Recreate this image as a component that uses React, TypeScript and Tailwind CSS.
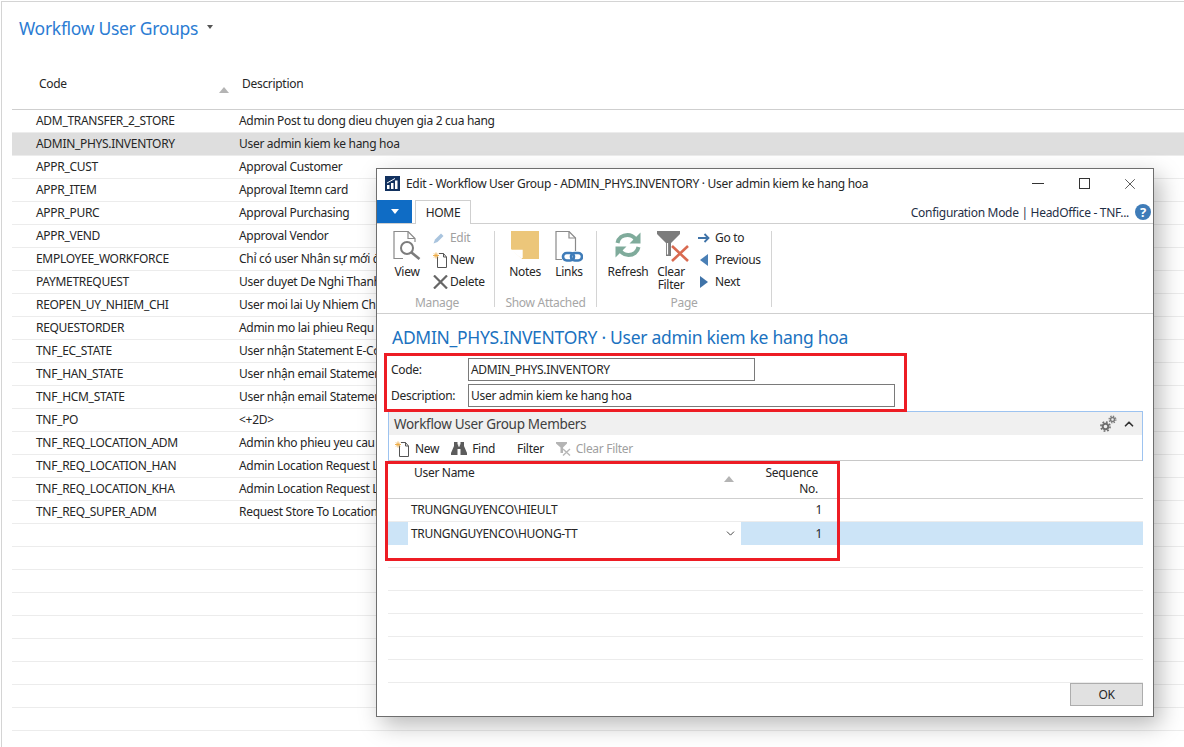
import { ReactNode } from 'react'
import { ChevronDown, ChevronUp, X } from 'lucide-react'

const groups: [string, string][] = [
  ['ADM_TRANSFER_2_STORE', 'Admin Post tu dong dieu chuyen gia 2 cua hang'],
  ['ADMIN_PHYS.INVENTORY', 'User admin kiem ke hang hoa'],
  ['APPR_CUST', 'Approval Customer'],
  ['APPR_ITEM', 'Approval Itemn card'],
  ['APPR_PURC', 'Approval Purchasing'],
  ['APPR_VEND', 'Approval Vendor'],
  ['EMPLOYEE_WORKFORCE', 'Chỉ có user Nhân sự mới đ'],
  ['PAYMETREQUEST', 'User duyet De Nghi Thanh'],
  ['REOPEN_UY_NHIEM_CHI', 'User moi lai Uy Nhiem Ch'],
  ['REQUESTORDER', 'Admin mo lai phieu Requ'],
  ['TNF_EC_STATE', 'User nhận Statement E-Co'],
  ['TNF_HAN_STATE', 'User nhận email Statemen'],
  ['TNF_HCM_STATE', 'User nhận email Statemen'],
  ['TNF_PO', '<+2D>'],
  ['TNF_REQ_LOCATION_ADM', 'Admin kho phieu yeu cau'],
  ['TNF_REQ_LOCATION_HAN', 'Admin Location Request L'],
  ['TNF_REQ_LOCATION_KHA', 'Admin Location Request L'],
  ['TNF_REQ_SUPER_ADM', 'Request Store To Location'],
  ...Array.from({ length: 9 }, (): [string, string] => ['', '']),
]

function SortMark() {
  return <div className="w-0 h-0 border-x-[5px] border-x-transparent border-b-[6px] border-b-[#b4b4b4]" />
}

function NewIcon() {
  return (
    <svg width="15" height="16" viewBox="0 0 15 16" fill="none">
      <path d="M4.5 4.5V15.5H13.5V5L10.5 1.5H6" stroke="#555" />
      <path d="M10.5 1.5V5H13.5" stroke="#555" />
      <path d="M3 0.5V6.5M0 3.5H6M1 1.5L5 5.5M5 1.5L1 5.5" stroke="#eda93f" strokeWidth="0.9" />
    </svg>
  )
}

function ViewIcon() {
  return (
    <svg width="28" height="29" viewBox="0 0 28 29" fill="none">
      <path d="M10 27.5H1V0.5H15L22 7.5V11" stroke="#8a8a8a" strokeWidth="1.2" />
      <path d="M15 0.5V7.5H22" stroke="#8a8a8a" strokeWidth="1.2" />
      <circle cx="14" cy="17" r="6" stroke="#7c7c7c" strokeWidth="2" />
      <path d="M18.5 21.5L26.5 28" stroke="#7c7c7c" strokeWidth="2.6" />
    </svg>
  )
}

function NotesIcon() {
  return (
    <svg width="28" height="28" viewBox="0 0 28 28">
      <path d="M0 0H28V28H11L0 18Z" fill="#ecc67a" />
      <path d="M0 19H11V28Z" fill="#fff" />
      <path d="M1 19.5H11V27" fill="none" stroke="#fff" strokeWidth="1.4" />
    </svg>
  )
}

function LinksIcon() {
  return (
    <svg width="28" height="31" viewBox="0 0 28 31" fill="none">
      <path d="M7 28.5H1V0.5H14L20.5 7V20" stroke="#8a8a8a" strokeWidth="1.2" />
      <path d="M14 0.5V7H20.5" stroke="#8a8a8a" strokeWidth="1.2" />
      <rect x="8" y="22" width="11" height="7.5" rx="3.7" stroke="#3f7cb8" strokeWidth="2.6" />
      <rect x="16" y="22" width="11" height="7.5" rx="3.7" stroke="#3f7cb8" strokeWidth="2.6" />
    </svg>
  )
}

function RefreshIcon() {
  return (
    <svg width="28" height="28" viewBox="0 0 28 28" fill="none">
      <path d="M3.5 12C4.5 7 8.5 4 13.5 4C17 4 19.5 5.5 21.5 8" stroke="#7fab9b" strokeWidth="4" />
      <path d="M26.5 1.5V12.5H15.5Z" fill="#7fab9b" />
      <path d="M24.5 16C23.5 21 19.5 24 14.5 24C11 24 8.5 22.5 6.5 20" stroke="#7fab9b" strokeWidth="4" />
      <path d="M1.5 26.5V15.5H12.5Z" fill="#7fab9b" />
    </svg>
  )
}

function ClearFilterIcon() {
  return (
    <svg width="32" height="31" viewBox="0 0 32 31" fill="none" className="ml-[3px]">
      <path d="M0 0H23V3L14 12V25H9V12L0 3Z" fill="#7c7c7c" />
      <path d="M10.5 12V23.5" stroke="#fff" strokeWidth="1.2" />
      <path d="M15 30L31 15M15 15L31 30" stroke="#d96a50" strokeWidth="2.6" />
    </svg>
  )
}

function Gears() {
  return (
    <svg width="17" height="17" viewBox="0 0 17 17" fill="none">
      <circle cx="5.5" cy="11.5" r="2.8" stroke="#6f6f6f" strokeWidth="2" />
      <circle cx="5.5" cy="11.5" r="4.6" stroke="#6f6f6f" strokeWidth="1.6" strokeDasharray="1.8 1.8" />
      <circle cx="12.5" cy="4.5" r="2" stroke="#7a7a7a" strokeWidth="1.5" />
      <circle cx="12.5" cy="4.5" r="3.4" stroke="#7a7a7a" strokeWidth="1.2" strokeDasharray="1.4 1.27" />
    </svg>
  )
}

function SmallAction({ icon, label, muted }: { icon: ReactNode; label: string; muted?: boolean }) {
  return (
    <div className="h-[22px] flex items-center">
      <div className="w-[17px] flex items-center">{icon}</div>
      <span className={muted ? 'text-[#a0a0a0]' : ''}>{label}</span>
    </div>
  )
}

function BigAction({ icon, label, width }: { icon: ReactNode; label: ReactNode; width: string }) {
  return (
    <div className={`${width} flex flex-col items-center text-center leading-[13px]`}>
      <div className="h-[33px] flex items-start justify-center">{icon}</div>
      <div className="mt-[1px]">{label}</div>
    </div>
  )
}

function RibbonGroup({ label, width, children }: { label: string; width: string; children: ReactNode }) {
  return (
    <div className={`${width} h-[76px] border-r border-[#d4d4d4] flex flex-col`}>
      <div className="h-[62px] shrink-0 flex items-start">{children}</div>
      <div className="text-center text-[#a6a6a6] leading-[8px] mt-[6px]">{label}</div>
    </div>
  )
}

function EditWindow() {
  return (
    <div className="absolute left-[376px] top-[168px] w-[778px] h-[549px] bg-white border border-[#6e6e6e] shadow-[6px_8px_22px_rgba(0,0,0,0.28)] flex flex-col">
      {/* Title bar */}
      <div className="h-[31px] shrink-0 flex items-center pl-[8px] pb-[2px]">
        <svg width="15" height="15" viewBox="0 0 15 15" className="shrink-0">
          <rect width="15" height="15" fill="#12315f" />
          <path d="M2 13V9H4.5V13ZM6 13V7H8.5V13ZM10 13V4.5H12.5V13Z" fill="#fff" />
          <path d="M2 7L10 2.5" stroke="#fff" strokeWidth="1" />
        </svg>
        <span className="ml-[6px] flex-1">Edit - Workflow User Group - ADMIN_PHYS.INVENTORY · User admin kiem ke hang hoa</span>
        <div className="w-[12px] h-[1px] bg-[#333] mr-[35px]" />
        <div className="w-[11px] h-[11px] border border-[#333] mr-[31px]" />
        <X size={18} strokeWidth={1} className="mr-[14px]" />
      </div>

      {/* Tab row */}
      <div className="h-[24px] shrink-0 flex border-b border-[#cfcfcf]">
        <div className="w-[35px] h-[23px] bg-[#0f6cc5] flex items-center justify-center">
          <div className="w-0 h-0 border-x-[4px] border-x-transparent border-t-[5px] border-t-white" />
        </div>
        <div className="ml-[3px] w-[56px] h-[24px] bg-white border border-b-0 border-[#cfcfcf] flex items-center justify-center">HOME</div>
        <div className="flex-1 flex items-center justify-end pr-[2px] text-[#1f2f46]">
          <span className="pt-[3px]">Configuration Mode | HeadOffice - TNF...</span>
          <div className="ml-[6px] w-[16px] h-[16px] rounded-full bg-[#3f7cb8] text-white text-[13px] font-bold flex items-center justify-center">?</div>
        </div>
      </div>

      {/* Ribbon */}
      <div className="h-[90px] shrink-0 flex pt-[7px] pl-[3px] border-b border-[#cfcfcf]">
        <RibbonGroup label="Manage" width="w-[115px]">
          <div className="ml-[11px] mr-[10px]">
            <BigAction width="w-[32px]" icon={<ViewIcon />} label="View" />
          </div>
          <div className="-mt-[4px]">
            <SmallAction
              muted
              label="Edit"
              icon={
                <svg width="12" height="12" viewBox="0 0 12 12">
                  <path d="M0.5 11.5L2 7.5L8 1.5L10.5 4L4.5 10Z" fill="#a9c4de" />
                </svg>
              }
            />
            <SmallAction label="New" icon={<NewIcon />} />
            <SmallAction
              label="Delete"
              icon={
                <svg width="15" height="14" viewBox="0 0 15 14">
                  <path d="M1 0.5L14 13.5M14 0.5L1 13.5" stroke="#666" strokeWidth="2.2" />
                </svg>
              }
            />
          </div>
        </RibbonGroup>
        <RibbonGroup label="Show Attached" width="w-[102px]">
          <div className="ml-[15px] mr-[13px]">
            <BigAction width="w-[30px]" icon={<NotesIcon />} label="Notes" />
          </div>
          <div className="ml-[1px]">
            <BigAction width="w-[30px]" icon={<LinksIcon />} label="Links" />
          </div>
        </RibbonGroup>
        <RibbonGroup label="Page" width="w-[175px]">
          <div className="ml-[11px]">
            <BigAction width="w-[40px]" icon={<RefreshIcon />} label="Refresh" />
          </div>
          <div className="ml-[4px] mr-[8px]">
            <BigAction width="w-[38px]" icon={<ClearFilterIcon />} label={<>Clear<br />Filter</>} />
          </div>
          <div className="-mt-[4px]">
            <SmallAction
              label="Go to"
              icon={
                <svg width="12" height="10" viewBox="0 0 12 10" fill="none">
                  <path d="M0 5H10M6.5 1L10.5 5L6.5 9" stroke="#3f73a8" strokeWidth="1.8" />
                </svg>
              }
            />
            <SmallAction
              label="Previous"
              icon={
                <svg width="12" height="12" viewBox="0 0 12 12">
                  <path d="M2 6L10 0V12Z" fill="#4a7fb5" />
                </svg>
              }
            />
            <SmallAction
              label="Next"
              icon={
                <svg width="12" height="12" viewBox="0 0 12 12">
                  <path d="M2 0L10 6L2 12Z" fill="#3f73a8" />
                </svg>
              }
            />
          </div>
        </RibbonGroup>
      </div>

      {/* Page title */}
      <div className="pl-[15px] mt-[11px] text-[17.5px] leading-[24px] text-[#1b72c0] whitespace-nowrap">
        ADMIN_PHYS.INVENTORY · User admin kiem ke hang hoa
      </div>

      {/* General fields */}
      <div className="pl-[14px] mt-[9px] flex flex-col gap-[3px]">
        <div className="flex items-center h-[23px]">
          <span className="w-[77px]">Code:</span>
          <div className="w-[287px] h-[23px] border border-[#7a7a7a] px-[2px] flex items-center">ADMIN_PHYS.INVENTORY</div>
        </div>
        <div className="flex items-center h-[23px]">
          <span className="w-[77px]">Description:</span>
          <div className="w-[427px] h-[23px] border border-[#7a7a7a] px-[2px] flex items-center">User admin kiem ke hang hoa</div>
        </div>
      </div>

      {/* Lines part */}
      <div className="ml-[11px] mr-[10px] mt-[4px] border border-b-0 border-[#9dc3f0]">
        <div className="h-[23px] bg-[#f0f0f0] pl-[5px] pr-[6px] flex items-center text-[13.5px] text-[#404040]">
          <span className="flex-1">Workflow User Group Members</span>
          <Gears />
          <ChevronUp size={14} strokeWidth={3} className="ml-[5px] text-[#333]" />
        </div>
        <div className="h-[26px] pl-[6px] pt-[2px] flex items-center border-b border-[#c8c8c8]">
          <NewIcon />
          <span className="ml-[5px]">New</span>
          <svg width="16" height="13" viewBox="0 0 16 13" fill="#5c5c5c" className="ml-[12px]">
            <path d="M3 0H6.5V2.5H7.2V4.5H8.8V2.5H9.5V0H13V4L16 11V13H9.5V7H6.5V13H0V11L3 4Z" />
          </svg>
          <span className="ml-[5px]">Find</span>
          <span className="ml-[22px]">Filter</span>
          <svg width="15" height="14" viewBox="0 0 15 14" className="ml-[12px]" fill="none">
            <path d="M0 0H11V1.5L7 5.5V11H4.5V5.5L0 1.5Z" fill="#b4b4b4" />
            <path d="M7 13.5L14 7M7 7L14 13.5" stroke="#b8b8b8" strokeWidth="1.4" />
          </svg>
          <span className="ml-[5px] text-[#a0a0a0]">Clear Filter</span>
        </div>
      </div>

      {/* Lines grid */}
      <div className="ml-[11px] mr-[10px]">
        <div className="h-[38px] flex border-b border-[#cfcfcf]">
          <div className="w-[336px] pl-[26px] pt-[4px] leading-[15px]">User Name</div>
          <div className="w-[17px] pt-[15px]">
            <SortMark />
          </div>
          <div className="w-[77px] pt-[4px] text-right leading-[16px]">
            Sequence<br />No.
          </div>
        </div>
        <div className="h-[23px] flex items-center border-b border-[#ececec]">
          <span className="w-[353px] pl-[23px]">TRUNGNGUYENCO\HIEULT</span>
          <span className="w-[81px] text-right">1</span>
        </div>
        <div className="h-[23px] flex bg-[#cce4f7]">
          <div className="ml-[20px] w-[333px] bg-white pl-[3px] pr-[4px] flex items-center justify-between">
            <span>TRUNGNGUYENCO\HUONG-TT</span>
            <ChevronDown size={13} strokeWidth={1.8} className="text-[#444]" />
          </div>
          <span className="w-[81px] text-right self-center">1</span>
        </div>
        {[0, 1, 2, 3, 4, 5].map(i => (
          <div key={i} className="h-[23px] border-b border-[#ececec]" />
        ))}
      </div>

      {/* Footer */}
      <div className="flex-1 flex items-end justify-end pr-[10px] pb-[10px]">
        <div className="w-[73px] h-[23px] bg-[#e1e1e1] border border-[#adadad] flex items-center justify-center">OK</div>
      </div>
    </div>
  )
}

export default function App() {
  return (
    <div className="relative w-[1184px] h-[747px] overflow-hidden bg-white text-[12px] leading-[16px] text-[#262626] font-['Noto_Sans',sans-serif] tracking-[-0.3px]">
      <div className="h-full ml-[1px] mt-[1px] border-l border-t border-[#d4d4d4] flex flex-col">
        {/* List page */}
        <div className="h-[52px] shrink-0 pl-[17px] pt-[12px] flex items-start">
          <span className="text-[17.5px] leading-[28px] text-[#2b7cd3]">Workflow User Groups</span>
          <div className="ml-[9px] mt-[11px] w-0 h-0 border-x-[3px] border-x-transparent border-t-[4px] border-t-[#555]" />
        </div>
        <div className="ml-[10px]">
          <div className="h-[56px] flex border-b border-[#cfcfcf]">
            <div className="w-[207px] pl-[27px] pt-[22px]">Code</div>
            <div className="w-[23px] pt-[33px]">
              <SortMark />
            </div>
            <div className="pt-[22px]">Description</div>
          </div>
          {groups.map(([code, description], i) => (
            <div
              key={i}
              className={`h-[23px] flex items-center border-b border-[#ececec] ${i === 1 ? 'bg-[#dedede]' : ''}`}
            >
              <span className="w-[227px] pl-[24px] shrink-0">{code}</span>
              <span className="whitespace-nowrap">{description}</span>
            </div>
          ))}
        </div>
      </div>

      <EditWindow />

      {/* Red annotation boxes */}
      <div className="absolute left-[384px] top-[353px] w-[523px] h-[59px] border-[3px] border-[#ed1c24]" />
      <div className="absolute left-[385px] top-[461px] w-[455px] h-[100px] border-[3px] border-[#ed1c24]" />
    </div>
  )
}
